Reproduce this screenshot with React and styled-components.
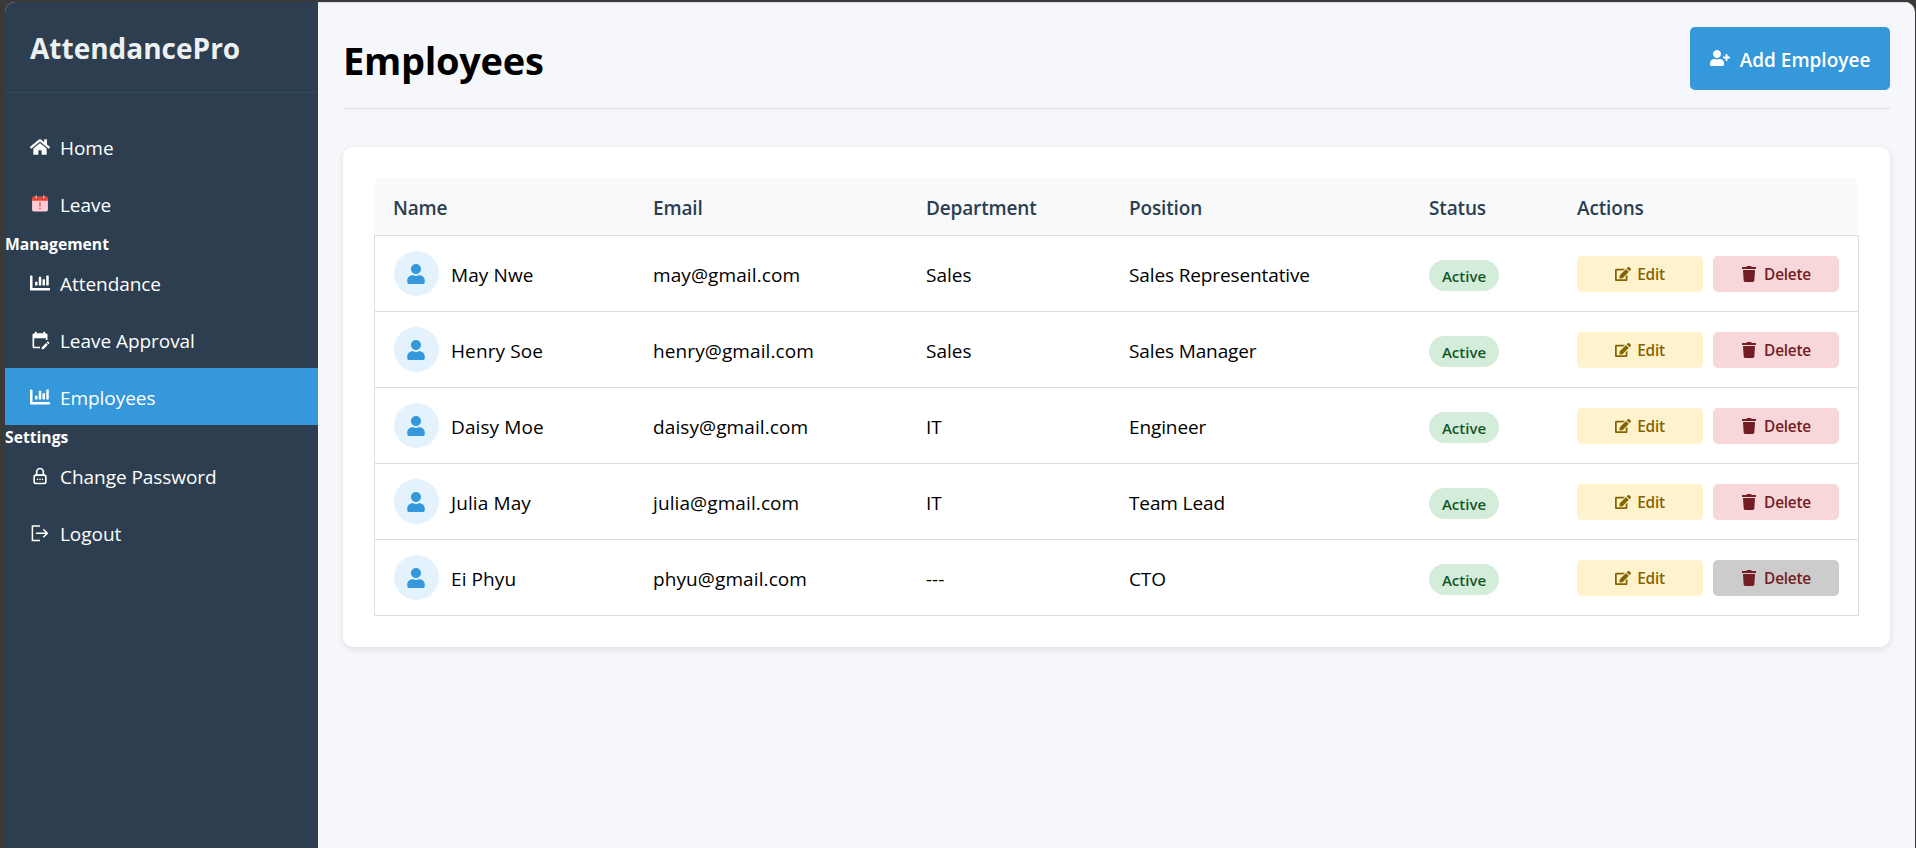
import React from "react";
import styled, { createGlobalStyle } from "styled-components";
import { FaHome, FaChartBar, FaUser, FaUserPlus, FaEdit, FaTrash } from "react-icons/fa";
import { FcLeave } from "react-icons/fc";
import { MdEditCalendar } from "react-icons/md";
import { TbLockPassword } from "react-icons/tb";

const GlobalStyle = createGlobalStyle`
  * { box-sizing: border-box; }
  body {
    margin: 0;
    background: #3a3a3a;
    font-family: "Open Sans", "Noto Sans", sans-serif;
    font-size: 19px;
    color: #000;
    overflow: hidden;
  }
`;

const Window = styled.div`
  display: flex;
  height: 846px;
  margin: 2px 1px 0 5px;
  border-radius: 10px 10px 0 0;
  overflow: hidden;
  background: #f5f7fb;
`;

const Sidebar = styled.aside`
  width: 313px;
  flex: none;
  background: #2c3e50;
  color: #fff;
`;

const Brand = styled.div`
  height: 91px;
  padding: 21px 25px 0;
  border-bottom: 1px solid #34495e;
  font-size: 28px;
  font-weight: 700;
  line-height: 50px;
  color: #ecf0f1;
`;

const Nav = styled.nav`
  padding-top: 25px;
`;

const NavItem = styled.a`
  display: flex;
  align-items: center;
  height: 57px;
  padding: 2px 25px 0;
  gap: 10px;
  line-height: 30px;
  letter-spacing: -0.05px;
  background: ${(p) => (p.$active ? "#3498db" : "transparent")};

  svg { flex: none; width: 20px; height: 20px; margin-bottom: 2px; }
`;

const NavHeading = styled.h4`
  height: 22px;
  margin: 0;
  font-size: 15.7px;
  font-weight: 700;
  line-height: 25px;
`;

const Main = styled.main`
  flex: 1;
  padding: 25px;
  box-shadow: inset 0 1px 0 #dcdddf;
`;

const PageHeader = styled.header`
  display: flex;
  justify-content: space-between;
  height: 82px;
  border-bottom: 1px solid #ddd;
`;

const PageTitle = styled.h1`
  margin: 0;
  font-size: 38px;
  font-weight: 700;
  line-height: 66px;
  letter-spacing: -0.3px;
`;

const AddButton = styled.button`
  display: flex;
  align-items: center;
  justify-content: center;
  gap: 10px;
  width: 200px;
  height: 63px;
  padding: 3px 0 0;
  border: 0;
  border-radius: 5px;
  background: #3498db;
  color: #fff;
  font: 600 19px/30px "Open Sans", sans-serif;

  svg { width: 20px; height: 16px; margin-bottom: 4px; }
`;

const Card = styled.section`
  margin-top: 38px;
  height: 500px;
  padding: 31px;
  border-radius: 10px;
  background: #fff;
  box-shadow: 0 2px 7px rgba(0, 0, 0, 0.1);
`;

const Row = styled.div`
  display: grid;
  grid-template-columns: 260px 273px 203px 300px 148px 1fr;
`;

const TableHead = styled(Row)`
  height: 57px;
  margin-right: 1px;
  border-radius: 8px 8px 0 0;
  background: #f8f9fb;
  color: #2c3e50;
  font-weight: 600;
  line-height: 61px;
  letter-spacing: -0.15px;
`;

const TableBody = styled.div`
  border: 1px solid #ddd;
`;

const TableRow = styled(Row)`
  height: ${(p) => (p.$last ? "75px" : "76px")};
  border-bottom: ${(p) => (p.$last ? "0" : "1px solid #ddd")};
  margin-left: -1px;
  line-height: 79px;
`;

const Cell = styled.div`
  padding-left: 19px;
  white-space: nowrap;
`;

const NameCell = styled(Cell)`
  display: flex;
  gap: 12px;
  padding-left: 20px;
  letter-spacing: 0.1px;
`;

const EmailCell = styled(Cell)`
  letter-spacing: 0.1px;
`;

const PositionCell = styled(Cell)`
  letter-spacing: -0.12px;
`;

const Avatar = styled.span`
  display: flex;
  align-items: center;
  justify-content: center;
  width: 45px;
  height: 45px;
  margin-top: 15px;
  padding-right: 1px;
  border-radius: 50%;
  background: #e3f2fd;
  color: #3498db;

  svg { width: 18px; height: 20px; }
`;

const Badge = styled.span`
  display: block;
  width: 70px;
  height: 31px;
  margin-top: 24px;
  border-radius: 16px;
  background: #d4edda;
  color: #155724;
  font-size: 15px;
  font-weight: 600;
  line-height: 33px;
  text-align: center;
`;

const Actions = styled(Cell)`
  display: flex;
  gap: 10px;
  padding-top: 20px;
`;

const tones = {
  edit: ["#fff3cd", "#856404"],
  delete: ["#f8d7da", "#721c24"],
  disabled: ["#cccccc", "#721c24"],
};

const ActionButton = styled.button`
  display: flex;
  align-items: center;
  justify-content: center;
  gap: ${(p) => (p.$tone === "edit" ? "6px" : "7px")};
  width: 126px;
  height: 36px;
  padding: 0;
  border: 0;
  border-radius: 5px;
  background: ${(p) => tones[p.$tone][0]};
  color: ${(p) => tones[p.$tone][1]};
  font: 600 15.4px "Open Sans", sans-serif;
  letter-spacing: -0.25px;

  svg { height: 16px; width: auto; }
`;

function LogoutIcon() {
  return (
    <svg viewBox="0 0 20 20" fill="none" stroke="currentColor" strokeWidth="1.5">
      <path d="M10 3H2.4V17.4H10" />
      <path d="M6 10.3H17.2M13.4 6.4L17.3 10.3L13.4 14.2" />
    </svg>
  );
}

const employees = [
  ["May Nwe", "may@gmail.com", "Sales", "Sales Representative", true],
  ["Henry Soe", "henry@gmail.com", "Sales", "Sales Manager", true],
  ["Daisy Moe", "daisy@gmail.com", "IT", "Engineer", true],
  ["Julia May", "julia@gmail.com", "IT", "Team Lead", true],
  ["Ei Phyu", "phyu@gmail.com", "---", "CTO", false],
];

export default function App() {
  return (
    <>
      <GlobalStyle />
      <Window>
        <Sidebar>
          <Brand>AttendancePro</Brand>
          <Nav>
            <NavItem><FaHome />Home</NavItem>
            <NavItem><FcLeave />Leave</NavItem>
            <NavHeading>Management</NavHeading>
            <NavItem><FaChartBar />Attendance</NavItem>
            <NavItem><MdEditCalendar />Leave Approval</NavItem>
            <NavItem $active><FaChartBar />Employees</NavItem>
            <NavHeading>Settings</NavHeading>
            <NavItem><TbLockPassword />Change Password</NavItem>
            <NavItem><LogoutIcon />Logout</NavItem>
          </Nav>
        </Sidebar>
        <Main>
          <PageHeader>
            <PageTitle>Employees</PageTitle>
            <AddButton><FaUserPlus />Add Employee</AddButton>
          </PageHeader>
          <Card>
            <TableHead>
              {["Name", "Email", "Department", "Position", "Status", "Actions"].map((h) => (
                <Cell key={h}>{h}</Cell>
              ))}
            </TableHead>
            <TableBody>
              {employees.map(([name, email, department, position, removable], i) => (
                <TableRow key={email} $last={i === employees.length - 1}>
                  <NameCell><Avatar><FaUser /></Avatar>{name}</NameCell>
                  <EmailCell>{email}</EmailCell>
                  <Cell>{department}</Cell>
                  <PositionCell>{position}</PositionCell>
                  <Cell><Badge>Active</Badge></Cell>
                  <Actions>
                    <ActionButton $tone="edit"><FaEdit />Edit</ActionButton>
                    <ActionButton $tone={removable ? "delete" : "disabled"}><FaTrash />Delete</ActionButton>
                  </Actions>
                </TableRow>
              ))}
            </TableBody>
          </Card>
        </Main>
      </Window>
    </>
  );
}
